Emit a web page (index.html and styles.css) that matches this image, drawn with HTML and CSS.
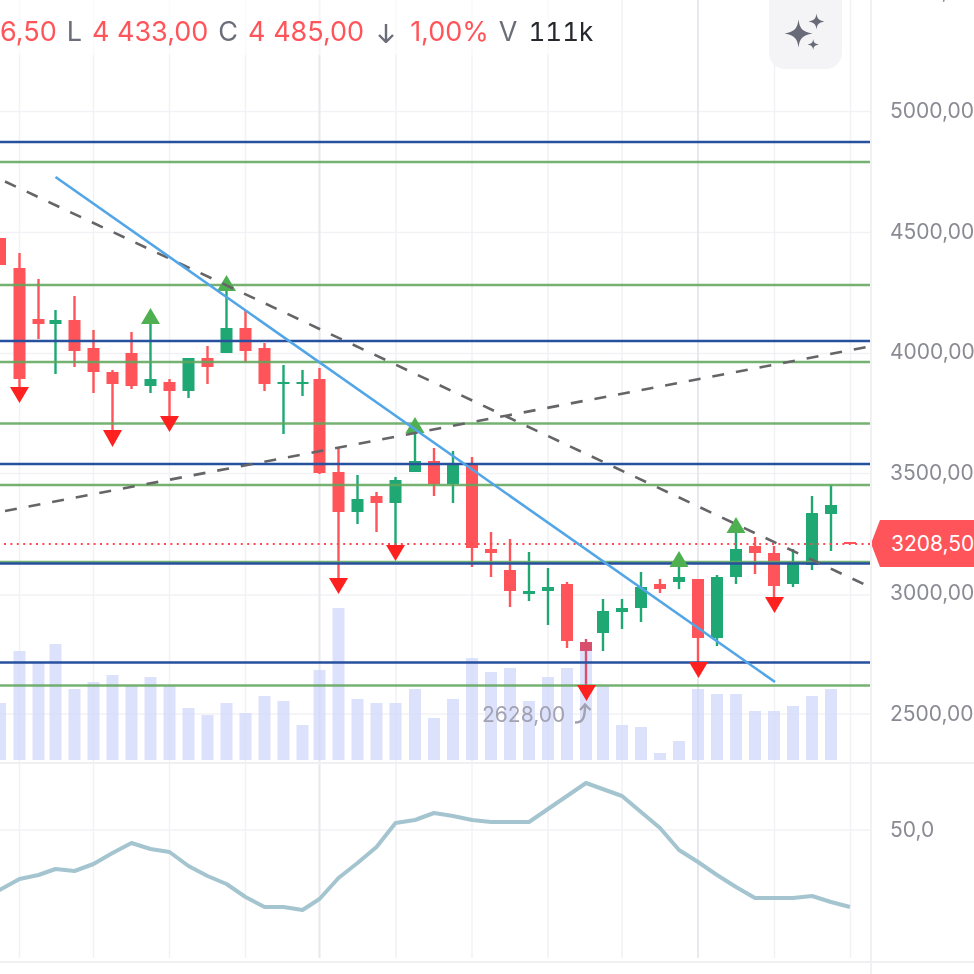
FILE: index.html
```html
<!DOCTYPE html>
<html lang="en">
<head>
<meta charset="utf-8">
<title>Chart</title>
<link rel="stylesheet" href="styles.css">
</head>
<body>
<div class="app">
  <section class="pane pane-main">
    <div class="plot">
      <svg class="chart" viewBox="0 0 870 762" width="870" height="762" aria-hidden="true">
        <path class="grid" d="M0 111.5H870M0 232.5H870M0 353.5H870M0 473.5H870M0 595H870M0 714H870"/>
        <path class="grid" d="M19.5 0V762M93.5 0V762M169.5 0V762M245.5 0V762M396 0V762M472 0V762M548 0V762M622 0V762M774.5 0V762M850.5 0V762"/>
        <path class="grid-major" d="M319.5 0V762M698 0V762"/>
        <path class="vol" d="M-6 703h12v57h-12zM13.5 651h12v109h-12zM32.5 663h12v97h-12zM49.5 644h12v116h-12zM68.5 689h12v71h-12zM87.5 682h12v78h-12zM106.5 675h12v85h-12zM125.5 686h12v74h-12zM144.5 677h12v83h-12zM163.5 686h12v74h-12zM182.5 708h12v52h-12zM201.5 715h12v45h-12zM220.5 703h12v57h-12zM239.5 713h12v47h-12zM258.5 696h12v64h-12zM277.5 701h12v59h-12zM296.5 725h12v35h-12zM313.5 670h12v90h-12zM332.5 608h12v152h-12zM351.5 699h12v61h-12zM370.5 703h12v57h-12zM389.5 703h12v57h-12zM409 689h12v71h-12zM428 718h12v42h-12zM447 699h12v61h-12zM466 658h12v102h-12zM485 672h12v88h-12zM504 668h12v92h-12zM523 701h12v59h-12zM542 677h12v83h-12zM561 668h12v92h-12zM580 647h12v113h-12zM597 686h12v74h-12zM616 725h12v35h-12zM635 727h12v33h-12zM654 753h12v7h-12zM673 741h12v19h-12zM692 689h12v71h-12zM711 694h12v66h-12zM730 694h12v66h-12zM749 711h12v49h-12zM768 711h12v49h-12zM787 706h12v54h-12zM806 696h12v64h-12zM825 689h12v71h-12z"/>
        <path class="wick dn" d="M19.5 253V387M38.5 279V339M74.5 296V367M93.5 330V393M112.5 370V431M131.5 332V389M169.5 379V417M207.5 346V384M245.5 310V362M264.5 343V391M319.5 368V474M338.5 448V579M376.5 492V532M434 448V496M472 457V567M491 532V577M510 539V607M567 582V648M660 579V593M698 580V663M755 537V574M774 546V598"/>
        <path class="body dn" d="M-6 238h12v27h-12zM13.5 268h12v111h-12zM32.5 319h12v5h-12zM68.5 320h12v31h-12zM87.5 348h12v24h-12zM106.5 372h12v12h-12zM125.5 353h12v33h-12zM163.5 382h12v9h-12zM201.5 358h12v9h-12zM239.5 328h12v23h-12zM258.5 348h12v36h-12zM313.5 379h12v94h-12zM332.5 472h12v40h-12zM370.5 496h12v7h-12zM428 461h12v23h-12zM466 463h12v85h-12zM485 549h12v4h-12zM504 570h12v21h-12zM561 584h12v57h-12zM654 584h12v5h-12zM692 579h12v59h-12zM749 546h12v7h-12zM768 553h12v33h-12zM844 542h12v2h-12z"/>
        <path class="wick up" d="M55.5 310V374M150.5 322V393M188.5 358V398M226.5 289V353M283.5 365V434M302.5 370V396M357.5 475V524M395.5 477V546M415 432V462M453 451V503M529 552V601M548 568V625M603 599V651M622 599V629M641 572V622M679 566V589M717 575V646M736 532V584M793 549V587M812 496V570M831 485V551"/>
        <path class="body up" d="M49.5 320h12v4h-12zM144.5 379h12v7h-12zM182.5 358h12v33h-12zM220.5 328h12v25h-12zM277.5 382h12v2h-12zM296.5 382h12v2h-12zM351.5 499h12v13h-12zM389.5 480h12v23h-12zM409 461h12v11h-12zM447 465h12v19h-12zM523 591h12v3h-12zM542 587h12v4h-12zM597 611h12v22h-12zM616 608h12v4h-12zM635 587h12v21h-12zM673 577h12v5h-12zM711 577h12v61h-12zM730 549h12v28h-12zM787 562h12v22h-12zM806 513h12v52h-12zM825 505h12v9h-12z"/>
        <path class="wick hover" d="M586 639V686"/>
        <path class="body hover" d="M580 642h12v9h-12z"/>
        <path class="hline-green" d="M0 162H870M0 285H870M0 362H870M0 423.5H870M0 485H870M0 562H870M0 685.5H870"/>
        <path class="hline-blue" d="M0 142H870M0 341H870M0 464H870M0 563.5H870M0 662.5H870"/>
        <path class="arrow-dn" d="M10 387h19l-9.5 16zM103 430h19l-9.5 17zM160 416h19l-9.5 16zM329 578h19l-9.5 16zM386 545h19l-9.5 16zM577 685h19l-9.5 16zM689 662h19l-9.5 16zM765 597h19l-9.5 16z"/>
        <path class="arrow-up" d="M150.5 308l9.5 16h-19zM226.5 275l9.5 16h-19zM415 417l9.5 16h-19zM679 551l9.5 16h-19zM736 517l9.5 16h-19z"/>
        <path class="dash" d="M5 181.5L870 587M5 511L870 346.5"/>
        <path class="price-line" d="M4 544H870"/>
        <path class="trend" d="M55.5 177L775 682"/>
        <path class="mark-arrow" d="M575 722.5C583 722.5 585 718 585 705M580 710l5-5.5 5.5 5.5"/>
      </svg>
      <div class="legend">
        <span class="val seg-open">6,50</span>
        <span class="key">L</span>
        <span class="val">4 433,00</span>
        <span class="key">C</span>
        <span class="val">4 485,00</span>
        <svg class="legend-arrow" viewBox="0 0 20 20" width="20" height="20" aria-hidden="true"><path d="M10 1V19M3 12l7 7 7-7"/></svg>
        <span class="val">1,00%</span>
        <span class="key key-v">V</span>
        <span class="vol-val">111k</span>
      </div>
      <button class="ai-chip" type="button" aria-label="AI">
        <svg viewBox="0 0 46 46" width="46" height="46" aria-hidden="true"><path d="M15.500 7.500C16.700 16.500 19 19.500 29.500 21.500 19 23.500 16.700 26.500 15.500 35.500 14.300 26.500 12 23.500 1.500 21.500 12 19.500 14.300 16.500 15.500 7.500Z"/><path d="M33.500 1.500C34.200 6.500 35.500 8.500 41.500 9.500 35.500 10.500 34.200 12.500 33.500 17.500 32.800 12.500 31.500 10.500 25.500 9.500 31.500 8.500 32.800 6.500 33.500 1.500Z"/><path d="M30.200 27C30.700 30.500 31.500 31.500 35.700 32.500 31.500 33.500 30.700 34.500 30.200 38 29.700 34.500 28.900 33.500 24.700 32.500 28.900 31.500 29.700 30.500 30.200 27Z"/></svg>
      </button>
      <span class="low-label">2628,00</span>
    </div>
    <div class="axis">
      <div class="ticks">
        <span class="tick">5500,00</span>
        <span class="tick">5000,00</span>
        <span class="tick">4500,00</span>
        <span class="tick">4000,00</span>
        <span class="tick">3500,00</span>
        <span class="tick">3000,00</span>
        <span class="tick">2500,00</span>
      </div>
      <div class="price-tag">3208,50</div>
    </div>
  </section>
  <section class="pane pane-rsi">
    <div class="plot">
      <svg class="chart" viewBox="0 764 870 197" width="870" height="197" aria-hidden="true">
        <path class="grid" d="M0 830H870"/>
        <path class="grid" d="M19.500 764V958M93.500 764V958M169.500 764V958M245.500 764V958M396 764V958M472 764V958M548 764V958M622 764V958M774.500 764V958M850.500 764V958"/>
        <path class="grid-major" d="M319.500 764V958M698 764V958"/>
        <path class="rsi" d="M-6 893L19.500 879 38.500 875 55.500 869 74.500 871 93.500 864 112.500 853 131.500 843 150.500 849 169.500 852 188.500 866 207.500 876 226.500 884 245.500 897 264.500 907 283.500 907 302.500 910 319.500 899 338.500 878 357.500 863 376.500 847 395.500 823 415 820 434 813 453 816 472 820 491 822 529 822 548 809 567 796 586 783 622 796 641 812 660 828 679 850 698 862 717 875 736 887 755 898 793 898 812 896 831 902 850 907"/>
      </svg>
    </div>
    <div class="axis">
      <span class="tick-rsi">50,0</span>
    </div>
  </section>
  <section class="pane pane-foot">
    <div class="plot"></div>
    <div class="axis"></div>
  </section>
</div>
</body>
</html>
```
FILE: styles.css
```css
* { box-sizing: border-box; }
html, body { margin: 0; padding: 0; background: #fff; }
body { width: 974px; height: 974px; overflow: hidden; font-family: Inter, "Liberation Sans", sans-serif; }
.app { display: flex; flex-direction: column; width: 974px; height: 974px; filter: blur(0.7px); }
.pane { display: flex; flex: none; }
.pane-main { height: 764px; border-bottom: 2px solid #f0f0f3; }
.pane-rsi { height: 199px; border-bottom: 2px solid #f0f0f3; }
.pane-foot { flex: 1; }
.plot { position: relative; width: 870px; flex: none; overflow: hidden; }
.axis { position: relative; flex: 1; border-left: 2px solid #f1f1f4; overflow: hidden; }
.chart { display: block; }

.grid { stroke: #f2f2f6; stroke-width: 1.500; fill: none; }
.grid-major { stroke: #e8e8ef; stroke-width: 2; fill: none; }
.vol { fill: #ced6fb; fill-opacity: .7; }
.wick { stroke-width: 2.400; fill: none; }
.wick.dn { stroke: #ff5459; }
.wick.up { stroke: #1fa874; }
.wick.hover { stroke: #d8506e; }
.body.dn { fill: #ff5459; }
.body.up { fill: #1fa874; }
.body.hover { fill: #d8506e; }
.arrow-dn { fill: #ff2020; }
.arrow-up { fill: #4fb052; }
.hline-green { stroke: #62a65c; stroke-width: 2.400; fill: none; opacity: .88; }
.hline-blue { stroke: #27509f; stroke-width: 2.400; fill: none; }
.dash { stroke: #656568; stroke-width: 2.600; stroke-dasharray: 12 12; fill: none; }
.price-line { stroke: #ff4a50; stroke-width: 2; stroke-dasharray: 2 4.400; fill: none; }
.trend { stroke: #52a5e6; stroke-width: 2.600; fill: none; }
.mark-arrow { stroke: #a2a2b2; stroke-width: 2.400; fill: none; }
.rsi { stroke: #a4c5d0; stroke-width: 4; fill: none; stroke-linejoin: round; }

.legend { position: absolute; left: 0; top: 0; width: 600px; height: 55px; padding-top: 8px; display: flex; align-items: center; white-space: nowrap; font-size: 27px; line-height: 30px; background: rgba(255, 255, 255, .6); }
.val { color: #ff5459; }
.key { color: #6b6d78; margin: 0 10px; }
.key-v { margin: 0 11px 0 10px; }
.vol-val { color: #26282e; font-size: 26px; font-variant-numeric: tabular-nums; }
.legend-arrow { margin: 2px 14px 0 12px; flex: none; }
.legend-arrow path { stroke: #6b6d78; stroke-width: 2.400; fill: none; }

.ai-chip { position: absolute; left: 769px; top: -16px; width: 73px; height: 85px; border: 0; border-radius: 16px; background: #f4f4f6; padding: 16px 0 0; display: flex; align-items: center; justify-content: center; }
.ai-chip svg { display: block; }
.ai-chip path { fill: #696a77; }

.low-label { position: absolute; left: 482px; top: 702px; line-height: 26px; font-size: 21px; color: #a2a2b2; }

.ticks { display: flex; flex-direction: column; margin-top: -69.500px; }
.tick { display: block; height: 120.600px; line-height: 120.600px; padding-left: 18px; font-size: 21px; color: #8a8a94; white-space: nowrap; }
.tick-rsi { display: block; padding: 54px 0 0 18px; line-height: 24px; font-size: 21px; color: #8a8a94; }
.price-tag { position: absolute; left: -1px; top: 520px; width: 110px; height: 47px; padding-left: 20px; line-height: 47px; font-size: 21px; color: #fff; background: #ff5459; white-space: nowrap; clip-path: polygon(0 50%, 9px 0, 100% 0, 100% 100%, 9px 100%); }
```
